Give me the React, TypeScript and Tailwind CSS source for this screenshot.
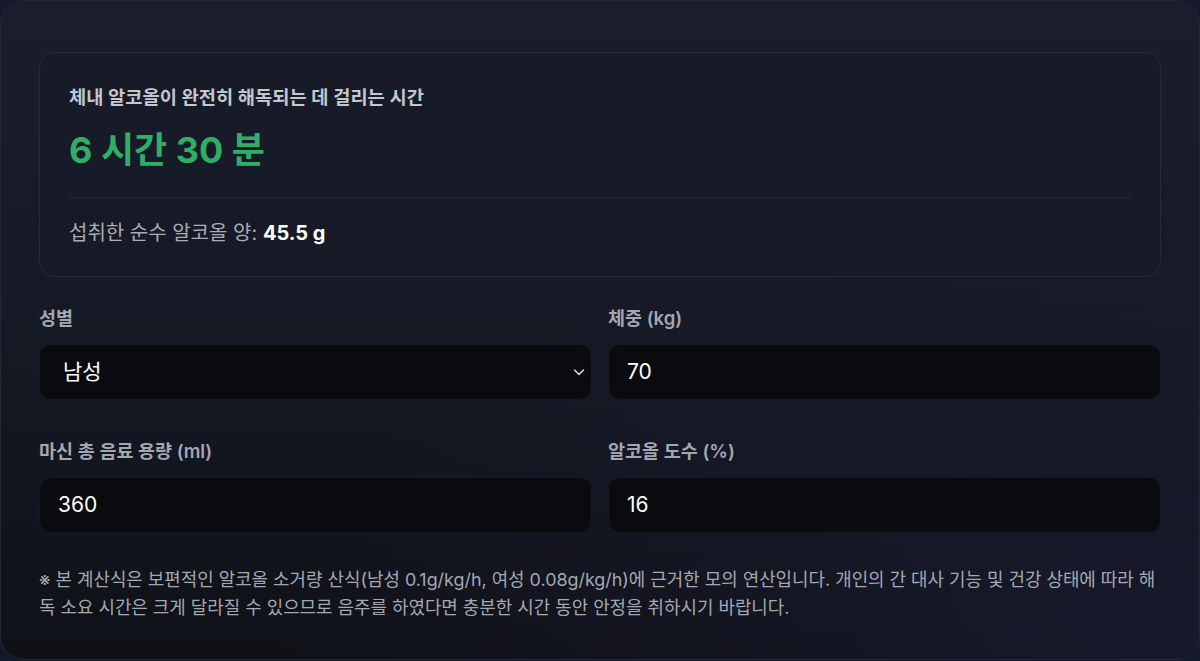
import React from "react";

function Field({ label, children }: { label: string; children: React.ReactNode }) {
  return (
    <div className="flex flex-col gap-[12px]">
      <label className="text-[18.5px] leading-[28px] font-semibold text-[#a3a7b1]">{label}</label>
      {children}
    </div>
  );
}

function NumberBox({ value }: { value: string }) {
  return (
    <div className="h-[56px] rounded-xl bg-[#0a0b0f] border border-[#161922] flex items-center pl-[18px] text-[21px] text-white">
      {value}
    </div>
  );
}

export default function App() {
  return (
    <div
      className="w-[1200px] h-[661px] bg-[#151a2a] text-white"
      style={{ fontFamily: 'Inter, "Noto Sans CJK KR", sans-serif' }}
    >
      <div className="relative h-[660px] rounded-[24px] border border-[#222638] overflow-hidden bg-[linear-gradient(180deg,#1a1d2b_0%,#161a26_45%,#0f1117_100%)]">
        <div className="absolute inset-0 bg-[radial-gradient(ellipse_at_100%_100%,rgba(30,30,58,0.55),transparent_55%)] pointer-events-none" />
        <div className="relative px-[38px] pt-[51px]">
          {/* result summary */}
          <div className="rounded-2xl border border-[#252a39] bg-[#171a27]/60 px-[29px] pt-[31px] pb-[29px]">
            <div className="text-[18.7px] leading-[28px] font-semibold text-[#c3c7d0]">
              체내 알코올이 완전히 해독되는 데 걸리는 시간
            </div>
            <div className="mt-[16px] text-[36px] leading-[44px] font-bold text-[#2fae68]">6 시간 30 분</div>
            <div className="mt-[25px] h-px bg-[#262a38]" />
            <div className="mt-[21px] text-[20px] leading-[28px] text-[#a8acb6]">
              섭취한 순수 알코올 양: <span className="font-bold text-white">45.5 g</span>
            </div>
          </div>

          {/* inputs */}
          <div className="mt-[27px] grid grid-cols-2 gap-x-[16px] gap-y-[37px]">
            <Field label="성별">
              <div className="h-[56px] rounded-xl bg-[#0a0b0f] border border-[#161922] flex items-center justify-between pl-[23px] pr-[5px] text-[21px] text-white">
                <span>남성</span>
                <svg width="14" height="14" viewBox="0 0 14 14" fill="none">
                  <path d="M2.5 5l4.5 4.5L11.5 5" stroke="#e5e7eb" strokeWidth="1.4" strokeLinecap="round" strokeLinejoin="round" />
                </svg>
              </div>
            </Field>
            <Field label="체중 (kg)">
              <NumberBox value="70" />
            </Field>
            <Field label="마신 총 음료 용량 (ml)">
              <NumberBox value="360" />
            </Field>
            <Field label="알코올 도수 (%)">
              <NumberBox value="16" />
            </Field>
          </div>

          {/* note */}
          <p className="mt-[33px] mr-[-6px] text-[17.9px] leading-[28px] text-[#a4a8b2] break-all">
            ※ 본 계산식은 보편적인 알코올 소거량 산식(남성 0.1g/kg/h, 여성 0.08g/kg/h)에 근거한 모의 연산입니다. 개인의 간 대사 기능 및 건강 상태에 따라 해독 소요 시간은 크게 달라질 수 있으므로 음주를 하였다면 충분한 시간 동안 안정을 취하시기 바랍니다.
          </p>
        </div>
      </div>
    </div>
  );
}
